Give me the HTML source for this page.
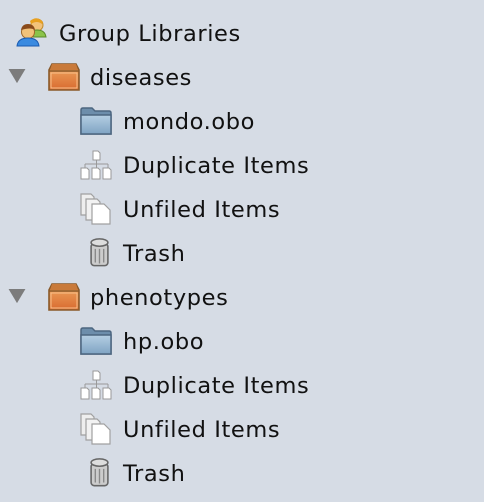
<!DOCTYPE html>
<html><head><style>
body{margin:0;width:484px;height:502px;background:#d6dce5;font-family:"DejaVu Sans","Liberation Sans",sans-serif;position:relative;overflow:hidden}
.t{position:absolute;font-size:22.5px;letter-spacing:0.6px;color:#111;line-height:26px;white-space:nowrap;margin-top:1px}
svg{position:absolute}
</style></head><body>
<svg width="0" height="0"><defs>
<linearGradient id="bx" x1="0" y1="0" x2="0" y2="1"><stop offset="0" stop-color="#f0a860"/><stop offset="1" stop-color="#d86a30"/></linearGradient>
<linearGradient id="fd" x1="0" y1="0" x2="0" y2="1"><stop offset="0" stop-color="#b5cfe3"/><stop offset="1" stop-color="#7fa3c3"/></linearGradient>
<symbol id="tri" viewBox="0 0 18 16"><path d="M0 0H18L9 15Z" fill="#7c7c7c"/></symbol>
<symbol id="box" viewBox="0 0 32 28"><path d="M4 1H28L31 7V27H1V7Z" fill="url(#bx)" stroke="#8a5a2a" stroke-width="1.6"/><path d="M1 8H31" stroke="#8a5a2a" stroke-width="1.5"/><path d="M4 1H28L30 7H2Z" fill="#c97a3a"/><rect x="3" y="10" width="26" height="15" fill="none" stroke="#f7c08a" stroke-width="1"/></symbol>
<symbol id="fold" viewBox="0 0 32 30"><path d="M1 4Q1 2 3 2H12L15 5H29Q31 5 31 7V28H1Z" fill="#6d8eab" stroke="#4d6680" stroke-width="1.5"/><path d="M1 9H31V28H1Z" fill="url(#fd)" stroke="#4d6680" stroke-width="1.5"/></symbol>
<symbol id="dup" viewBox="0 0 32 30"><g fill="#fff" stroke="#999" stroke-width="1"><path d="M13 1H18L20 3V10H13Z"/><path d="M16.5 10V14M5 14H28M5 14V18M16.5 14V18M28 14V18" fill="none"/><path d="M1 18H7L9 20V29H1Z"/><path d="M12 18H18L20 20V29H12Z"/><path d="M23 18H29L31 20V29H23Z"/></g></symbol>
<symbol id="unf" viewBox="0 0 32 32"><g fill="#fff" stroke="#a0a0a0" stroke-width="1.2"><path d="M1 1H11L14 4V22H1Z" fill="#eee"/><path d="M6 6H17L20 9V27H6Z" fill="#f2f2f2"/><path d="M12 11H24L30 17V31H12Z"/></g></symbol>
<symbol id="tr" viewBox="0 0 20 28"><rect x="2" y="6" width="16" height="21" rx="3" fill="#ccc" stroke="#666" stroke-width="1.5"/><ellipse cx="10" cy="5" rx="8" ry="3.5" fill="#ddd" stroke="#666" stroke-width="1.5"/><path d="M6 11V24M10 11V25M14 11V24" stroke="#888" stroke-width="1.3"/></symbol>
</defs></svg>

<svg style="left:16px;top:15px" width="32" height="32" viewBox="0 0 32 32">
<circle cx="21" cy="10" r="6" fill="#f2c27a" stroke="#c08a2a"/><path d="M14 6Q21 0 27 7L26 9Q21 5 15 9Z" fill="#e8a020"/><path d="M12 22Q13 15 21 15Q29 15 30 22Z" fill="#8bc34a" stroke="#5a8a2a"/>
<circle cx="12" cy="17" r="6.5" fill="#f2c27a" stroke="#a0682a"/><path d="M5 15Q6 9 12 9Q18 9 19 15Q15 12 5 15Z" fill="#8a4a1a"/><path d="M1 31Q2 23 12 23Q22 23 23 31Z" fill="#3a8ae0" stroke="#1a5ab0"/>
</svg>
<div class="t" style="left:59px;top:20px">Group Libraries</div>

<svg style="left:8px;top:69px" width="18" height="15"><use href="#tri"/></svg>
<svg style="left:48px;top:63px" width="32" height="28"><use href="#box"/></svg>
<div class="t" style="left:90px;top:64px">diseases</div>
<svg style="left:80px;top:106px" width="32" height="30"><use href="#fold"/></svg>
<div class="t" style="left:123px;top:108px">mondo.obo</div>
<svg style="left:80px;top:150px" width="32" height="30"><use href="#dup"/></svg>
<div class="t" style="left:123px;top:152px">Duplicate Items</div>
<svg style="left:80px;top:193px" width="32" height="32"><use href="#unf"/></svg>
<div class="t" style="left:123px;top:196px">Unfiled Items</div>
<svg style="left:89px;top:237px" width="21" height="30" viewBox="0 0 20 28"><use href="#tr"/></svg>
<div class="t" style="left:123px;top:240px">Trash</div>

<svg style="left:8px;top:289px" width="18" height="15"><use href="#tri"/></svg>
<svg style="left:48px;top:283px" width="32" height="28"><use href="#box"/></svg>
<div class="t" style="left:90px;top:284px">phenotypes</div>
<svg style="left:80px;top:326px" width="32" height="30"><use href="#fold"/></svg>
<div class="t" style="left:123px;top:328px">hp.obo</div>
<svg style="left:80px;top:370px" width="32" height="30"><use href="#dup"/></svg>
<div class="t" style="left:123px;top:372px">Duplicate Items</div>
<svg style="left:80px;top:413px" width="32" height="32"><use href="#unf"/></svg>
<div class="t" style="left:123px;top:416px">Unfiled Items</div>
<svg style="left:89px;top:457px" width="21" height="30" viewBox="0 0 20 28"><use href="#tr"/></svg>
<div class="t" style="left:123px;top:460px">Trash</div>
</body></html>
